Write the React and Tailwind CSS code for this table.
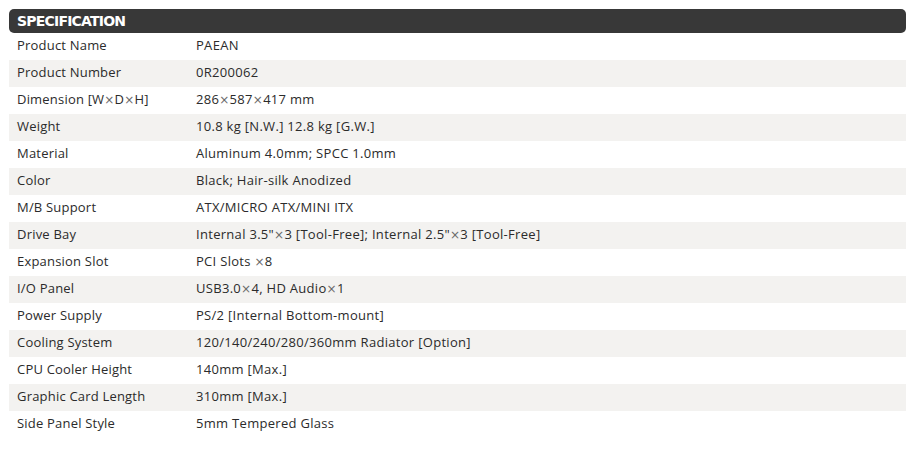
const specs = [
  ["Product Name", "PAEAN"],
  ["Product Number", "0R200062"],
  ["Dimension [W×D×H]", "286×587×417 mm"],
  ["Weight", "10.8 kg [N.W.] 12.8 kg [G.W.]"],
  ["Material", "Aluminum 4.0mm; SPCC 1.0mm"],
  ["Color", "Black; Hair-silk Anodized"],
  ["M/B Support", "ATX/MICRO ATX/MINI ITX"],
  ["Drive Bay", "Internal 3.5\"×3 [Tool-Free]; Internal 2.5\"×3 [Tool-Free]"],
  ["Expansion Slot", "PCI Slots ×8"],
  ["I/O Panel", "USB3.0×4, HD Audio×1"],
  ["Power Supply", "PS/2 [Internal Bottom-mount]"],
  ["Cooling System", "120/140/240/280/360mm Radiator [Option]"],
  ["CPU Cooler Height", "140mm [Max.]"],
  ["Graphic Card Length", "310mm [Max.]"],
  ["Side Panel Style", "5mm Tempered Glass"],
];

// the × sign is set in a wider, lighter glyph like on the original page
const withTimes = (text) =>
  text.split("×").map((part, i) => (
    <span key={i}>
      {i > 0 && (
        <span className="font-['DejaVu_Sans',sans-serif] text-[12px] text-[#6a6a6a]">×</span>
      )}
      {part}
    </span>
  ));

export default function App() {
  return (
    <div className="w-[921px] h-[454px] bg-white pt-[9px] pl-[9px] font-['Open_Sans',sans-serif]">
      <div className="w-[897px]">
        <div className="h-6 bg-[#383838] rounded-[5px] flex items-center px-2">
          <span className="text-white font-bold text-[14px] tracking-[-0.8px] font-['DejaVu_Sans',sans-serif]">
            SPECIFICATION
          </span>
        </div>
        <div className="flex flex-col">
          {specs.map(([label, value], i) => (
            <div
              key={label}
              className={`flex h-[27px] items-center pb-[2px] text-[13px] text-[#2b2b2b] ${i % 2 === 1 ? "bg-[#f3f2f0]" : "bg-white"}`}
            >
              <div className="w-[179px] pl-2 tracking-[0.2px]">{withTimes(label)}</div>
              <div className="pl-2 tracking-[0.3px]">{withTimes(value)}</div>
            </div>
          ))}
        </div>
      </div>
    </div>
  );
}
